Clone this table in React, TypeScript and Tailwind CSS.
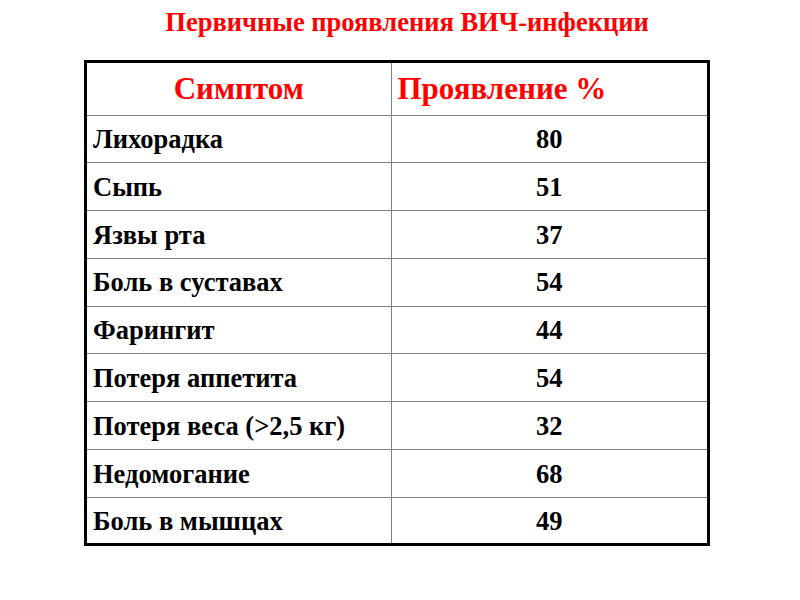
import React from 'react';

const rows: [string, string][] = [
  ['Лихорадка', '80'],
  ['Сыпь', '51'],
  ['Язвы рта', '37'],
  ['Боль в суставах', '54'],
  ['Фарингит', '44'],
  ['Потеря аппетита', '54'],
  ['Потеря веса (>2,5 кг)', '32'],
  ['Недомогание', '68'],
  ['Боль в мышцах', '49'],
];

const App: React.FC = () => {
  return (
    <div className="w-[800px] h-[600px] bg-white font-['Liberation_Serif','Times_New_Roman',serif] font-bold">
      <h1 className="pt-[7px] h-[60px] text-center text-[26.5px] leading-[30px] text-[#ff0000] pl-[14px]">
        Первичные проявления ВИЧ-инфекции
      </h1>
      <div className="ml-[84px] w-[626px] border-[3px] border-black">
        <table className="w-full table-fixed border-collapse">
          <colgroup>
            <col className="w-[304px]" />
            <col />
          </colgroup>
          <thead>
            <tr className="h-[52px] border-b border-[#808080]">
              <th className="text-center text-[31px] text-[#ff0000] font-bold border-r border-[#808080]">Симптом</th>
              <th className="text-left pl-[6px] text-[31px] text-[#ff0000] font-bold">Проявление %</th>
            </tr>
          </thead>
          <tbody>
            {rows.map(([name, value], i) => (
              <tr
                key={name}
                className={i < rows.length - 1 ? 'h-[47.8px] border-b border-[#808080]' : 'h-[46px]'}
              >
                <td className="pl-[6px] pt-[2px] text-[26.5px] text-black border-r border-[#808080]">{name}</td>
                <td className="text-center pt-[2px] text-[26.5px] text-black">{value}</td>
              </tr>
            ))}
          </tbody>
        </table>
      </div>
    </div>
  );
};

export default App;
